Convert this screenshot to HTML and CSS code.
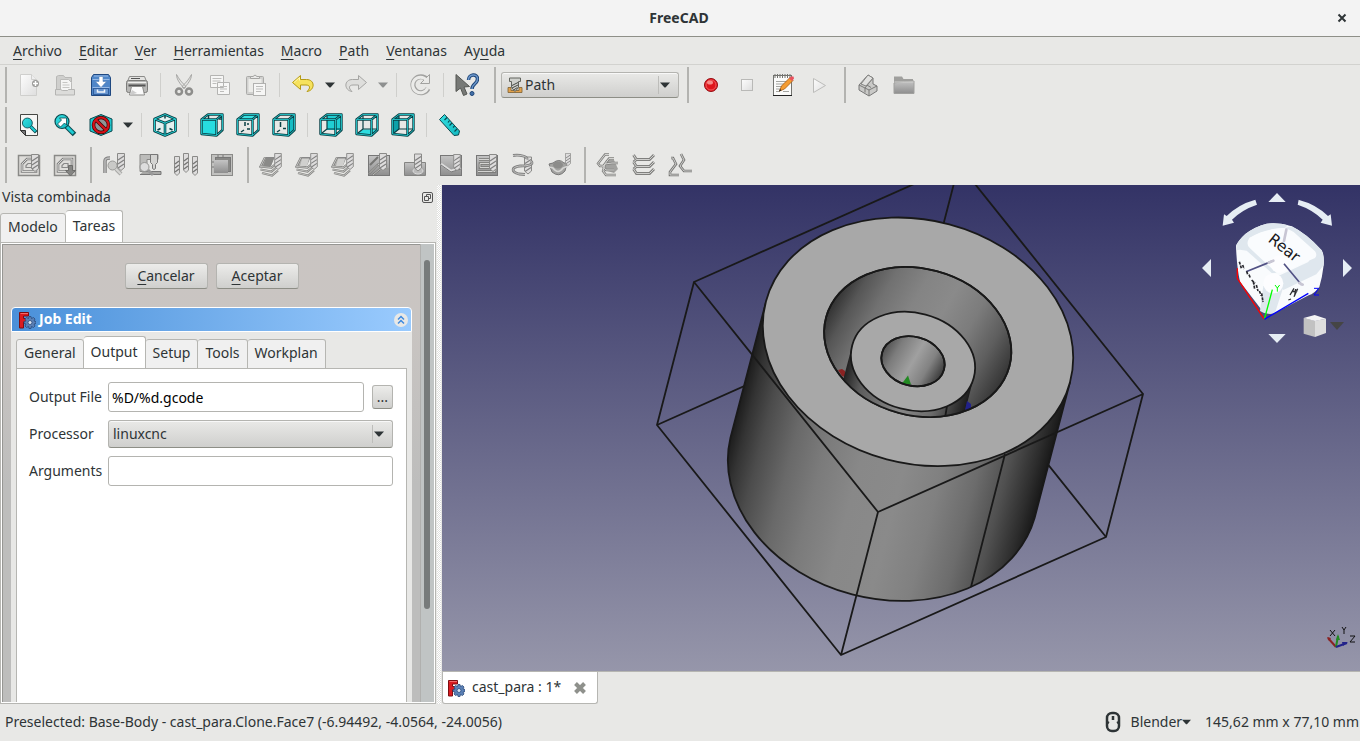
FILE: index.html
```html
<!DOCTYPE html>
<html lang="es">
<head>
<meta charset="utf-8">
<title>FreeCAD</title>
<link rel="stylesheet" href="styles.css">
</head>
<body>
<svg class="sprite" aria-hidden="true">
  <defs>
    <linearGradient id="teal" x1="0" y1="0" x2="1" y2="1"><stop offset="0" stop-color="#34e0e2"/><stop offset="1" stop-color="#12b8c0"/></linearGradient>
    <linearGradient id="gray" x1="0" y1="0" x2="0" y2="1"><stop offset="0" stop-color="#c4c4c4"/><stop offset="1" stop-color="#8e8e8e"/></linearGradient>
    <linearGradient id="pale" x1="0" y1="0" x2="1" y2="1"><stop offset="0" stop-color="#fdfdfd"/><stop offset="1" stop-color="#dedede"/></linearGradient>
  </defs>
  <symbol id="new" viewBox="0 0 24 24"><path d="M3.5 1.500h11l5 5v16h-16z" fill="url(#pale)" stroke="#cfcfcd"/><path d="M14.500 1.500v5h5" fill="#eee" stroke="#cfcfcd"/><circle cx="18.500" cy="10.500" r="3.500" fill="#9a9a98"/><path d="M18.500 8v5M16 10.500h5" stroke="#fff" stroke-width="1.500"/></symbol>
  <symbol id="open" viewBox="0 0 24 24"><path d="M3.500 17V3.500l2-1h5l1.500 2h6.500V17z" fill="#cfcfcd" stroke="#b8b8b6"/><path d="M7.500 18V6.500h8l3 3V18z" fill="#f5f5f4" stroke="#bcbcba"/><path d="M9.500 9.500h5M9.500 12h7M9.500 14.500h7" stroke="#c6c6c4"/><path d="M2.500 16.500h5l2 1h5l1-1h6v5.500h-19z" fill="#dcdcda" stroke="#b4b4b2"/></symbol>
  <symbol id="save" viewBox="0 0 24 24"><path d="M4.500 1.500h15l2 3v18h-19v-18z" fill="#4f86c8" stroke="#1f4880"/><path d="M5 3h14M3.500 6.500h17M3.500 14.500h17" stroke="#96b9e6"/><path d="M10 3.500h4v5h3.500l-5.500 6-5.500-6H10z" fill="#fff" stroke="#5f87b8" stroke-width=".6"/><rect x="4.500" y="15.500" width="15" height="6" fill="#6594cf" stroke="#315f9e"/><path d="M8.500 16.500v2.500h7v-2.500" fill="none" stroke="#f2f5fa" stroke-width="1.500"/></symbol>
  <symbol id="print" viewBox="0 0 24 24"><path d="M4.500 3.500h15l2 5h-19z" fill="#e3e3e1" stroke="#8b8b89"/><path d="M6 5.500h9" stroke="#555"/><rect x="1.500" y="7.500" width="21" height="12" rx="2" fill="#b8b8b6" stroke="#7c7c7a"/><path d="M3 9.500h18" stroke="#efefed"/><path d="M3.500 12.500h17" stroke="#555" stroke-width="2"/><path d="M6.500 13.500h11l2 8.500h-15z" fill="#fafafa" stroke="#8c8c8a"/><path d="M7 17l5 3-7 2z" fill="#ccc"/></symbol>
  <symbol id="cut" viewBox="0 0 24 24"><path d="M4.500 1.500c0 5 4 10 8 14l1.500-2C10 10 7 6 4.500 1.500zM19.500 1.500c0 5-4 10-8 14l-1.500-2c4-3.500 7-7.500 9.500-12z" fill="#e6e6e4" stroke="#a6a6a4"/><circle cx="7" cy="18.500" r="3" fill="none" stroke="#8e8e8c" stroke-width="2.500"/><circle cx="17" cy="18.500" r="3" fill="none" stroke="#8e8e8c" stroke-width="2.500"/></symbol>
  <symbol id="copy" viewBox="0 0 24 24"><path d="M2.500 2.500h13v12h-13zM9.500 9.500h12v12h-12z" fill="#f6f6f5" stroke="#b4b4b2"/><path d="M4.500 5.500h9M4.500 8h8M4.500 10.500h4M12 13.500h7M12 16h7M12 18.500h4" stroke="#bdbdbb"/></symbol>
  <symbol id="paste" viewBox="0 0 24 24"><rect x="2.500" y="3.500" width="17" height="18" rx="1" fill="#d1d1cf" stroke="#aaaaa8"/><rect x="4.500" y="6" width="13" height="13" fill="#ecece9"/><path d="M6.500 5.500v-2h2.500q2-3 4 0h2.500v2z" fill="#e9e9e8" stroke="#a4a4a2"/><rect x="9.500" y="10.500" width="12" height="12" fill="#f6f6f5" stroke="#b1b1af"/><path d="M12 13.500h7M12 16h7M12 18.500h5" stroke="#bdbdbb"/></symbol>
  <symbol id="undo" viewBox="0 0 24 24"><path d="M1.500 9.500L9.500 2.500v4h6c9 0 8.500 11 .5 12 4-3.500 3-6.500-1-6.500H9.500v4.500z" fill="#f6e25e" stroke="#b59a12" stroke-linejoin="round"/><path d="M3 9.500l5.500-5v3" fill="none" stroke="#fff6ae"/></symbol>
  <symbol id="redo" viewBox="0 0 24 24"><path d="M22.500 9.500l-8-7v4h-6c-9 0-8.500 11-.5 12-4-3.500-3-6.500 1-6.500h5.500v4.500z" fill="#dededc" stroke="#a5a5a3" stroke-linejoin="round"/></symbol>
  <symbol id="refresh" viewBox="0 0 24 24"><path d="M19 6.500A8 8 0 1 0 20 15.500" fill="none" stroke="#a2a2a0" stroke-width="5"/><path d="M21.500 1.500v9h-9z" fill="#e9e9e7" stroke="#a2a2a0" stroke-linejoin="round"/><path d="M18.500 7A7.800 7.800 0 1 0 19.600 15.200" fill="none" stroke="#ebebe9" stroke-width="3"/></symbol>
  <symbol id="whats" viewBox="0 0 24 24"><path d="M1 1.500v17l4.500-3.500 3 7.500 3.500-1.500-3-7 5.500-.5z" fill="#777976" stroke="#555753"/><path d="M13.500 7c0-6 9-7 9-1 0 5-5.500 4.500-5.500 10" fill="none" stroke="#1f4678" stroke-width="3.500"/><path d="M13.500 7c0-6 9-7 9-1 0 5-5.500 4.500-5.500 10" fill="none" stroke="#6b96cb" stroke-width="1.500"/><circle cx="17" cy="20.500" r="2" fill="#426fa8" stroke="#1f4678"/></symbol>
  <symbol id="path" viewBox="0 0 16 16"><path d="M1 15.500v-5h3v3h8v-3h3v5z" fill="#e3a24b" stroke="#7b6032" stroke-width=".8"/><path d="M2.500 1h11v3.500h-2v6l-3.500 4-3.500-4v-6h-2z" fill="#cfd1cd" stroke="#62655f"/><path d="M5 8.500l6-3M5 11l6-3M6.500 13l4-2.500" stroke="#454843"/></symbol>
  <symbol id="rec" viewBox="0 0 24 24"><circle cx="12" cy="12" r="6.500" fill="#df161c" stroke="#960d12"/><circle cx="12" cy="12" r="5" fill="none" stroke="#f15b5c"/><ellipse cx="11" cy="9.500" rx="3" ry="2" fill="#f68b87"/></symbol>
  <symbol id="stop" viewBox="0 0 24 24"><rect x="6.500" y="6.500" width="11" height="11" fill="url(#pale)" stroke="#b9b9b7"/></symbol>
  <symbol id="edit" viewBox="0 0 24 24"><rect x="2.500" y="2.500" width="18" height="20" fill="#fbfbfa" stroke="#72736f"/><path d="M2 22.500h19" stroke="#222"/><path d="M4 1v4M6.500 1v4M9 1v4M11.500 1v4M14 1v4M16.500 1v4M19 1v4" stroke="#72736f"/><path d="M5 8.500h11M5 11h8M5 13.500h6M5 16h5M5 18.500h4M12 18.500h6" stroke="#a4a5a1"/><path d="M8.500 18l2-5L19 4.500l3 3-8.500 8.500z" fill="#f49c32" stroke="#a75b10" stroke-width=".8"/><path d="M18 5.500l2-2h2.500l.5 2-2 2.500z" fill="#e8525e"/><path d="M8 18.500l1-2.500 1.500 1.500z" fill="#222"/></symbol>
  <symbol id="play" viewBox="0 0 24 24"><path d="M6.500 5.500v14l12-7z" fill="url(#pale)" stroke="#bcbcba" stroke-linejoin="round"/></symbol>
  <symbol id="part" viewBox="0 0 24 24"><path d="M3 12l9-10 5 3v6l4 2v5l-8 5-10-6z" fill="#c9c9c7" stroke="#777" stroke-linejoin="round"/><path d="M3 12l6 3 8-10M9 15v4.500M9 15l4 2 8-4M13 17v6M11 12l4 2.500" fill="none" stroke="#7b7b79"/><path d="M12 2l5 3-7 8-5-2z" fill="#e1e1df" stroke="#858583"/></symbol>
  <symbol id="folder" viewBox="0 0 24 24"><path d="M2 3.500h8l1.500 2.500H21v6H2z" fill="#9f9f9d"/><path d="M2 10q9-2 20-2v12.500H2z" fill="url(#gray)" stroke="#a0a09e"/><path d="M2.500 9h19" stroke="#cfcfcd"/></symbol>
  <symbol id="lens" viewBox="0 0 24 24"><path d="M13.500 13.500l8 8" stroke="#0b484e" stroke-width="5"/><path d="M13.500 13.500l7 7" stroke="#1ccbd2" stroke-width="3"/><circle cx="9" cy="8.500" r="7" fill="url(#teal)" stroke="#0b484e" stroke-width="1.200"/></symbol>
  <symbol id="fit" viewBox="0 0 24 24"><path d="M3.500 1.500h17v21h-12l-5-5z" fill="#f6f6f5" stroke="#454743"/><path d="M3.500 17.500h5v5z" fill="#777" stroke="#333"/><use href="#lens" x="4" y="4" width="17" height="17"/></symbol>
  <symbol id="zoomsel" viewBox="0 0 24 24"><use href="#lens" width="24" height="24"/><path d="M4.500 11l4-4-2-2h7v7l-2-2-4 4z" fill="#fff" stroke="#0b484e" stroke-width=".8"/></symbol>
  <symbol id="noentry" viewBox="0 0 24 24"><path d="M1 6l11-4.500L23 6v12l-11 4.500L1 18z" fill="#20c7ce" stroke="#0b484e" stroke-linejoin="round"/><circle cx="12" cy="12" r="7.500" fill="#8e9696" stroke="#3b0505" stroke-width="3.500"/><path d="M7 7l10 10" stroke="#3b0505" stroke-width="3.500"/><circle cx="12" cy="12" r="7.500" fill="none" stroke="#d51218" stroke-width="2.200"/><path d="M7 7l10 10" stroke="#d51218" stroke-width="2.200"/></symbol>
  <symbol id="iso" viewBox="0 0 24 24"><path d="M12 1.500L22.500 6v12L12 22.500 1.500 18V6z" fill="#e4f1f0"/><path d="M12 2.500v3M4.500 17l3-1.500M19.500 17l-3-1.500" stroke="#083f44" stroke-width="1.500"/><path d="M12 1.500L22.500 6v12L12 22.500 1.500 18V6zM1.500 6L12 10 22.500 6M12 10v12" fill="none" stroke="#083f44" stroke-width="2.600" stroke-linejoin="round"/><path d="M12 1.500L22.500 6v12L12 22.500 1.500 18V6zM1.500 6L12 10 22.500 6M12 10v12" fill="none" stroke="#26cfd2" stroke-width="1"/></symbol>
  <symbol id="frame" viewBox="0 0 24 24"><path d="M1.500 6.500H16.500V22.500L1.500 21zM1.500 6.500L8 1.500H22.500L16.500 6.500M22.500 1.500V17L16.500 22.500" fill="none" stroke="#083f44" stroke-width="2.400" stroke-linejoin="round"/><path d="M1.500 6.500H16.500V22.500L1.500 21zM1.500 6.500L8 1.500H22.500L16.500 6.500M22.500 1.500V17L16.500 22.500" fill="none" stroke="#22b9be" stroke-width="1"/></symbol>
  <symbol id="front" viewBox="0 0 24 24"><path d="M8.500 2v5M19 6h3" stroke="#083f44" stroke-width="1.500"/><path d="M1.500 6.500h15v16l-15-1.500z" fill="#27dce0"/><use href="#frame"/></symbol>
  <symbol id="top" viewBox="0 0 24 24"><path d="M1.500 6.500l6.500-5h14.500l-6 5z" fill="#38e3e5"/><path d="M9 9v4M8 17l-3 2M11 16h3M12 10v2" stroke="#083f44" stroke-width="1.500"/><use href="#frame"/></symbol>
  <symbol id="right" viewBox="0 0 24 24"><path d="M16.500 6.500l6-5V17l-6 5.500z" fill="#15bcc4"/><path d="M8.500 9v5M8 17l-3 2M11 15.500h3" stroke="#083f44" stroke-width="1.500"/><use href="#frame"/></symbol>
  <symbol id="rear" viewBox="0 0 24 24"><path d="M8 1.500h14.500V17H8z" fill="#20cfd4"/><path d="M8 3v13M8 16l-5 4M8 16h14" fill="none" stroke="#083f44" stroke-width="1.200"/><use href="#frame"/></symbol>
  <symbol id="bottom" viewBox="0 0 24 24"><path d="M1.500 21L8 16.500h14.500l-6 6z" fill="#2ddde0"/><path d="M8 3v13M8 16l-5 4M8 16h14" fill="none" stroke="#083f44" stroke-width="1.200"/><use href="#frame"/></symbol>
  <symbol id="left" viewBox="0 0 24 24"><path d="M1.500 6.500l6.500-5V16.500l-6.500 4.500z" fill="#0ea1a9"/><path d="M8 3v13M8 16l-5 4M8 16h14" fill="none" stroke="#083f44" stroke-width="1.200"/><use href="#frame"/></symbol>
  <symbol id="ruler" viewBox="0 0 24 24"><path d="M1.500 6.500L6.500 1.500l15 16.500-1 4-4.500.5z" fill="url(#teal)" stroke="#0b484e" stroke-linejoin="round"/><path d="M9 4.500L6.500 7M11.500 7.500l-1.500 2M14 10l-2.500 2.500M16.500 13l-1.500 1.500M19 16l-2.500 2.500" stroke="#0b484e" stroke-width="1.200"/></symbol>
  <symbol id="bit" viewBox="0 0 8 18"><path d="M.5.5h7v14l-3.500 3-3.500-3z" fill="#dedddd" stroke="#8a8a88"/><path d="M1 7l6-4M1 11l6-4M1 15l6-4" stroke="#808080" stroke-width="1.200"/></symbol>
  <symbol id="job" viewBox="0 0 24 24"><path d="M1.500 2.500h21v20h-21z" fill="#deddda" stroke="#8a8a88" stroke-width="1.500"/><path d="M5 18.500V11l5-5h9v12.500H5z" fill="none" stroke="#808080" stroke-width="2.600"/><path d="M5 18.500V11l5-5h9v12.500H5z" fill="none" stroke="#d8d8d5"/><path d="M9 14.500v-2l2-2h4v4z" fill="none" stroke="#888" stroke-width="1.200"/></symbol>
  <symbol id="jobbit" viewBox="0 0 24 24"><use href="#job"/><use href="#bit" x="14" y="1" width="8" height="18"/></symbol>
  <symbol id="post" viewBox="0 0 24 24"><use href="#job"/><path d="M15.500 12.500h4v5h3l-5 5.500-5-5.500h3z" fill="#858583" stroke="#6c6c6a"/></symbol>
  <symbol id="inspect" viewBox="0 0 24 24"><path d="M3 20V8q0-3 5-3" fill="none" stroke="#808080" stroke-width="3.500"/><path d="M3 20V8q0-3 5-3" fill="none" stroke="#bbb" stroke-width="1.500"/><use href="#bit" x="15" y="0" width="8" height="18"/><circle cx="10.500" cy="12.500" r="4.500" fill="#c9c9c7" stroke="#9a9a98"/><path d="M14 16l5 5" stroke="#a9a9a7" stroke-width="4"/><path d="M14 16l5 5" stroke="#d5d5d3" stroke-width="2"/></symbol>
  <symbol id="sim" viewBox="0 0 24 24"><path d="M2 1.500h18v5H9v12H2z" fill="#bcbcba" stroke="#8a8a88"/><path d="M12.500 1.500h7v8l-2 2v4l-1.500 1-1.500-1v-4l-2-2z" fill="#d4d4d2" stroke="#777"/><path d="M5 18.500h18v3H2" fill="#a9a9a7" stroke="#777"/><circle cx="6.500" cy="14" r="4.500" fill="#ddd" stroke="#969694"/><path d="M10 17l5 5" stroke="#999" stroke-width="3"/></symbol>
  <symbol id="longbit" viewBox="0 0 6 20"><path d="M.5.500h5v16.500l-2.500 2.500L.5 17z" fill="#dedddd" stroke="#8a8a88"/><path d="M1 8l4-3M1 12l4-3M1 16l4-3" stroke="#757573" stroke-width="1.300"/></symbol>
  <symbol id="bits" viewBox="0 0 24 24"><use href="#longbit" x="0" y="3" width="6" height="20"/><use href="#longbit" x="9" y="0" width="6" height="20"/><use href="#longbit" x="18" y="3" width="6" height="20"/></symbol>
  <symbol id="stock" viewBox="0 0 24 24"><rect x="1.500" y="1.500" width="21" height="21" fill="#c1c1bf" stroke="#8a8a88"/><rect x="5.500" y="4.500" width="15" height="14" fill="#888886" stroke="#777"/><rect x="4" y="7" width="14" height="13" fill="url(#gray)"/><path d="M8 2v2M13 2v2M2 9h2M2 14h2" stroke="#777"/></symbol>
  <symbol id="layers" viewBox="0 0 24 24"><path d="M6 4.500h9l-4 9H2z" fill="#aeaeac" stroke="#888"/><path d="M6 4.500L1.500 13.500l11 1 6-5M1.500 16.500l11 2 6-5M3 20l10 2.500 6-5" fill="none" stroke="#80807e" stroke-width="2.200"/><path d="M6 4.500L1.500 13.500l11 1 6-5M1.500 16.500l11 2 6-5M3 20l10 2.500 6-5" fill="none" stroke="#d0d0ce" stroke-width=".8"/></symbol>
  <symbol id="contour" viewBox="0 0 24 24"><use href="#layers"/><path d="M7 5h8l-3 8H4z" fill="#8a8a88"/><use href="#bit" x="15" y="0" width="8" height="17"/></symbol>
  <symbol id="pocket" viewBox="0 0 24 24"><use href="#layers"/><path d="M7 6h7l-2 7H5z" fill="#d0d0ce"/><use href="#bit" x="15" y="0" width="8" height="17"/></symbol>
  <symbol id="plate" viewBox="0 0 24 24"><rect x="1.500" y="2.500" width="21" height="20" fill="url(#gray)" stroke="#777"/></symbol>
  <symbol id="face" viewBox="0 0 24 24"><use href="#plate"/><path d="M2 20.500l9-9h4M6 22l7-6h9M3 12l8-8" fill="none" stroke="#757573" stroke-width="2"/><path d="M2 20.500l9-9h4M6 22l7-6h9" stroke="#d0d0ce" fill="none" stroke-width=".8"/><use href="#bit" x="12" y="0" width="8" height="18"/></symbol>
  <symbol id="drill" viewBox="0 0 24 24"><path d="M1.500 9.500h21v13h-21z" fill="url(#gray)" stroke="#848482"/><ellipse cx="15" cy="18" rx="5" ry="3" fill="#bbb" stroke="#ddd"/><use href="#bit" x="11" y="0" width="8" height="19"/></symbol>
  <symbol id="engrave" viewBox="0 0 24 24"><use href="#plate"/><path d="M2 11l10 7 10-3" fill="none" stroke="#ddd" stroke-width="2.500"/><path d="M2 12l10 7 10-3" fill="none" stroke="#777"/><use href="#bit" x="14" y="1" width="8" height="17"/></symbol>
  <symbol id="slot" viewBox="0 0 24 24"><use href="#plate"/><path d="M4 6.500h16v4H5v4h15v4H3" fill="none" stroke="#757573" stroke-width="2.600"/><path d="M4 6.500h16v4H5v4h15v4H3" fill="none" stroke="#d4d4d2"/><use href="#bit" x="14" y="1" width="8" height="18"/></symbol>
  <symbol id="helix" viewBox="0 0 24 24"><use href="#bit" x="13" y="3" width="8" height="19"/><path d="M2 2.500c7-1 15 1 14 4M20 8c4 4-4 5-11 5-9 1-9 6-1 8l6 .5" fill="none" stroke="#808080" stroke-width="2.800"/><path d="M2 2.500c7-1 15 1 14 4M20 8c4 4-4 5-11 5-9 1-9 6-1 8l6 .5" fill="none" stroke="#c8c8c6"/></symbol>
  <symbol id="surface" viewBox="0 0 24 24"><path d="M2 11l4-1q6-5 11 0h3l-2 8q-6 7-13 1z" fill="#a3a3a1" stroke="#777"/><path d="M2 14l4 1q5 7 10 0l5-2" fill="none" stroke="#d7d7d5" stroke-width="1.500"/><ellipse cx="11" cy="12" rx="5" ry="3.500" fill="#8c8c8a"/><use href="#bit" x="18" y="0" width="6" height="13"/></symbol>
  <symbol id="array" viewBox="0 0 24 24"><path d="M10 7h8l4 9-4 4-10-3z" fill="#a2a2a0"/><path d="M13 1.500H9l-7 9 2 2.500h4M18 5.500h-5l-6 8 3 3.500h8M22 10h-6l-7 1-2 7 3 4h10" fill="none" stroke="#80807e" stroke-width="2.400"/><path d="M13 1.500H9l-7 9 2 2.500h4M18 5.500h-5l-6 8 3 3.500h8M22 10h-6l-7 1-2 7 3 4h10" fill="none" stroke="#d4d4d2"/></symbol>
  <symbol id="copyop" viewBox="0 0 24 24"><path d="M1.500 2l3 4.500h13L22 2M1.500 9l3 4.500h13L22 9M1.500 16l3 4.500h13l4.500-4.500M1.500 9l3-2.500M1.500 16l3-2.500" fill="none" stroke="#80807e" stroke-width="2.800"/><path d="M1.500 2l3 4.500h13L22 2M1.500 9l3 4.500h13L22 9M1.500 16l3 4.500h13l4.500-4.500M1.500 9l3-2.500M1.500 16l3-2.500" fill="none" stroke="#d0d0ce"/></symbol>
  <symbol id="simple" viewBox="0 0 24 24"><path d="M3 5h2l3 6-6 8v3h9M13 1l3 6-4 6 4 5h8" fill="none" stroke="#757573" stroke-width="2.600"/><path d="M3 5h2l3 6-6 8v3h9M13 1l3 6-4 6 4 5h8" fill="none" stroke="#d0d0ce"/></symbol>
  <symbol id="freecad" viewBox="0 0 18 18"><path d="M1.500 1.500h9V5H5.500v2.500H9V11H5.500v6h-4z" fill="#db1b20" stroke="#7e0d10"/><path d="M2.500 2.500h7.500" stroke="#f26a6a"/><path d="M11 5.500h2l.5 2 2-1 1.500 1.500-1 2 2 .5v2l-2 .5 1 2-1.500 1.500-2-1-.5 2h-2l-.5-2-2 1L7 15l1-2-2-.500v-2l2-.5-1-2 1.500-1.500 2 1z" fill="#5a80b6" stroke="#294a7b" stroke-width=".8"/><circle cx="12" cy="11.500" r="2" fill="#dce5f1" stroke="#294a7b" stroke-width=".8"/></symbol>
  <symbol id="arrow" viewBox="0 0 10 6"><path d="M0 .5h10L5.500 5.500h-1z" fill="currentColor"/></symbol>
</svg>

<div class="window">
  <header class="titlebar">
    <h1>FreeCAD</h1>
    <button class="close" type="button" aria-label="Cerrar"><svg viewBox="0 0 10 10"><path d="M1.500 1.500l7 7M8.500 1.500l-7 7" stroke="#2e3436" stroke-width="2"/></svg></button>
  </header>

  <nav class="menubar">
    <button type="button"><u>A</u>rchivo</button>
    <button type="button"><u>E</u>ditar</button>
    <button type="button"><u>V</u>er</button>
    <button type="button"><u>H</u>erramientas</button>
    <button type="button"><u>M</u>acro</button>
    <button type="button"><u>P</u>ath</button>
    <button type="button"><u>V</u>entanas</button>
    <button type="button">Ay<u>u</u>da</button>
  </nav>

  <div class="toolrow">
    <div class="toolbar">
      <button class="tool" type="button" aria-label="Nuevo"><svg><use href="#new"/></svg></button>
      <button class="tool" type="button" aria-label="Abrir"><svg><use href="#open"/></svg></button>
      <button class="tool" type="button" aria-label="Guardar"><svg><use href="#save"/></svg></button>
      <button class="tool" type="button" aria-label="Imprimir"><svg><use href="#print"/></svg></button>
      <span class="sep"></span>
      <button class="tool" type="button" aria-label="Cortar"><svg><use href="#cut"/></svg></button>
      <button class="tool" type="button" aria-label="Copiar"><svg><use href="#copy"/></svg></button>
      <button class="tool" type="button" aria-label="Pegar"><svg><use href="#paste"/></svg></button>
      <span class="sep"></span>
      <button class="tool" type="button" aria-label="Deshacer"><svg><use href="#undo"/></svg></button>
      <button class="more" type="button" aria-label="Lista de deshacer"><svg><use href="#arrow"/></svg></button>
      <button class="tool" type="button" aria-label="Rehacer"><svg><use href="#redo"/></svg></button>
      <button class="more dim" type="button" aria-label="Lista de rehacer"><svg><use href="#arrow"/></svg></button>
      <span class="sep"></span>
      <button class="tool" type="button" aria-label="Refrescar"><svg><use href="#refresh"/></svg></button>
      <span class="sep"></span>
      <button class="tool" type="button" aria-label="Ayuda contextual"><svg><use href="#whats"/></svg></button>
    </div>
    <div class="toolbar wide">
      <div class="combo workbench">
        <svg class="lead"><use href="#path"/></svg>
        <select aria-label="Entorno de trabajo"><option>Path</option></select>
        <svg class="drop"><use href="#arrow"/></svg>
      </div>
    </div>
    <div class="toolbar">
      <button class="tool" type="button" aria-label="Grabar macro"><svg><use href="#rec"/></svg></button>
      <button class="tool" type="button" aria-label="Detener macro"><svg><use href="#stop"/></svg></button>
      <button class="tool" type="button" aria-label="Macros"><svg><use href="#edit"/></svg></button>
      <button class="tool" type="button" aria-label="Ejecutar macro"><svg><use href="#play"/></svg></button>
    </div>
    <div class="toolbar">
      <button class="tool" type="button" aria-label="Crear pieza"><svg><use href="#part"/></svg></button>
      <button class="tool" type="button" aria-label="Crear grupo"><svg><use href="#folder"/></svg></button>
    </div>
  </div>

  <div class="toolrow">
    <div class="toolbar">
      <button class="tool" type="button" aria-label="Ajustar todo"><svg><use href="#fit"/></svg></button>
      <button class="tool" type="button" aria-label="Ajustar selección"><svg><use href="#zoomsel"/></svg></button>
      <button class="tool" type="button" aria-label="Estilo de dibujo"><svg><use href="#noentry"/></svg></button>
      <button class="more" type="button" aria-label="Estilos"><svg><use href="#arrow"/></svg></button>
      <span class="sep"></span>
      <button class="tool" type="button" aria-label="Isométrica"><svg><use href="#iso"/></svg></button>
      <span class="sep"></span>
      <button class="tool" type="button" aria-label="Frontal"><svg><use href="#front"/></svg></button>
      <button class="tool" type="button" aria-label="Planta"><svg><use href="#top"/></svg></button>
      <button class="tool" type="button" aria-label="Derecha"><svg><use href="#right"/></svg></button>
      <span class="sep"></span>
      <button class="tool" type="button" aria-label="Posterior"><svg><use href="#rear"/></svg></button>
      <button class="tool" type="button" aria-label="Inferior"><svg><use href="#bottom"/></svg></button>
      <button class="tool" type="button" aria-label="Izquierda"><svg><use href="#left"/></svg></button>
      <span class="sep"></span>
      <button class="tool" type="button" aria-label="Medir distancia"><svg><use href="#ruler"/></svg></button>
    </div>
  </div>

  <div class="toolrow">
    <div class="toolbar">
      <button class="tool" type="button" aria-label="Trabajo"><svg><use href="#jobbit"/></svg></button>
      <button class="tool" type="button" aria-label="Postprocesar"><svg><use href="#post"/></svg></button>
    </div>
    <div class="toolbar">
      <button class="tool" type="button" aria-label="Inspeccionar"><svg><use href="#inspect"/></svg></button>
      <button class="tool" type="button" aria-label="Simulador"><svg><use href="#sim"/></svg></button>
      <button class="tool" type="button" aria-label="Herramientas"><svg><use href="#bits"/></svg></button>
      <button class="tool" type="button" aria-label="Material"><svg><use href="#stock"/></svg></button>
    </div>
    <div class="toolbar">
      <button class="tool" type="button" aria-label="Contorno"><svg><use href="#contour"/></svg></button>
      <button class="tool" type="button" aria-label="Perfil de caras"><svg><use href="#pocket"/></svg></button>
      <button class="tool" type="button" aria-label="Perfil de aristas"><svg><use href="#pocket"/></svg></button>
      <button class="tool" type="button" aria-label="Cajera"><svg><use href="#face"/></svg></button>
      <button class="tool" type="button" aria-label="Taladrado"><svg><use href="#drill"/></svg></button>
      <button class="tool" type="button" aria-label="Grabado"><svg><use href="#engrave"/></svg></button>
      <button class="tool" type="button" aria-label="Planeado"><svg><use href="#slot"/></svg></button>
      <button class="tool" type="button" aria-label="Hélice"><svg><use href="#helix"/></svg></button>
      <button class="tool" type="button" aria-label="Superficie"><svg><use href="#surface"/></svg></button>
    </div>
    <div class="toolbar">
      <button class="tool" type="button" aria-label="Matriz"><svg><use href="#array"/></svg></button>
      <button class="tool" type="button" aria-label="Copia"><svg><use href="#copyop"/></svg></button>
      <button class="tool" type="button" aria-label="Copia simple"><svg><use href="#simple"/></svg></button>
    </div>
  </div>

  <main class="work">
    <aside class="dock">
      <div class="dockhead">
        <h2>Vista combinada</h2>
        <button class="float" type="button" aria-label="Flotar"><svg viewBox="0 0 11 11"><rect x=".5" y=".5" width="10" height="10" rx="1.500" fill="none" stroke="#555"/><path d="M4.500 4V2.500h4v4H7M2.500 4.500H6.500v4h-4z" fill="none" stroke="#555"/></svg></button>
      </div>
      <div class="tabs outer">
        <button class="tab" type="button">Modelo</button>
        <button class="tab on" type="button">Tareas</button>
      </div>
      <div class="pane">
        <div class="tasks">
          <div class="actions">
            <button class="push" type="button"><u>C</u>ancelar</button>
            <button class="push" type="button"><u>A</u>ceptar</button>
          </div>
          <section class="job">
            <div class="jobhead">
              <svg class="logo"><use href="#freecad"/></svg>
              <h3>Job Edit</h3>
              <button class="fold" type="button" aria-label="Plegar"><svg viewBox="0 0 14 14"><circle cx="7" cy="7" r="7" fill="#e8e8e6"/><path d="M4 6.500l3-3 3 3M4 10.500l3-3 3 3" fill="none" stroke="#3f8ade" stroke-width="1.500"/></svg></button>
            </div>
            <div class="jobbody">
              <div class="tabs">
                <button class="tab" type="button">General</button>
                <button class="tab on" type="button">Output</button>
                <button class="tab" type="button">Setup</button>
                <button class="tab" type="button">Tools</button>
                <button class="tab" type="button">Workplan</button>
              </div>
              <form class="form">
                <label for="file">Output File</label>
                <div class="filebox">
                  <input id="file" type="text" value="%D/%d.gcode">
                  <button class="browse" type="button" aria-label="Examinar">...</button>
                </div>
                <label for="proc">Processor</label>
                <div class="combo">
                  <select id="proc"><option>linuxcnc</option></select>
                  <svg class="drop"><use href="#arrow"/></svg>
                </div>
                <label for="args">Arguments</label>
                <input id="args" type="text">
              </form>
            </div>
          </section>
        </div>
        <div class="scroll"><span class="thumb"></span></div>
      </div>
    </aside>
    <div class="splitter"></div>

    <section class="viewer">
      <div class="canvas">
        <svg class="scene" viewBox="442 185 918 486" preserveAspectRatio="xMidYMid slice">
          <defs>
            <linearGradient id="side" gradientUnits="userSpaceOnUse" x1="766" y1="302" x2="1070" y2="382">
              <stop offset="0" stop-color="#1c1c1c"/><stop offset=".04" stop-color="#333"/><stop offset=".1" stop-color="#4c4c4c"/><stop offset=".2" stop-color="#696969"/><stop offset=".3" stop-color="#7b7b7b"/><stop offset=".42" stop-color="#888"/><stop offset=".56" stop-color="#8a8a8a"/><stop offset=".68" stop-color="#808080"/><stop offset=".79" stop-color="#6c6c6c"/><stop offset=".88" stop-color="#505050"/><stop offset=".96" stop-color="#2d2d2d"/><stop offset="1" stop-color="#191919"/>
            </linearGradient>
            <linearGradient id="wall" gradientUnits="userSpaceOnUse" x1="826" y1="318" x2="1009" y2="366">
              <stop offset="0" stop-color="#303030"/><stop offset=".1" stop-color="#565656"/><stop offset=".22" stop-color="#717171"/><stop offset=".38" stop-color="#848484"/><stop offset=".54" stop-color="#8a8a8a"/><stop offset=".7" stop-color="#7c7c7c"/><stop offset=".85" stop-color="#5e5e5e"/><stop offset="1" stop-color="#343434"/>
            </linearGradient>
            <linearGradient id="postside" gradientUnits="userSpaceOnUse" x1="852" y1="345" x2="974" y2="378">
              <stop offset="0" stop-color="#202020"/><stop offset=".15" stop-color="#5c5c5c"/><stop offset=".5" stop-color="#888"/><stop offset=".75" stop-color="#6c6c6c"/><stop offset="1" stop-color="#1c1c1c"/>
            </linearGradient>
            <linearGradient id="bore" gradientUnits="userSpaceOnUse" x1="882" y1="353" x2="944" y2="370">
              <stop offset="0" stop-color="#505050"/><stop offset=".2" stop-color="#7c7c7c"/><stop offset=".5" stop-color="#a0a0a0"/><stop offset=".75" stop-color="#828282"/><stop offset="1" stop-color="#383838"/>
            </linearGradient>
            <clipPath id="holeclip"><ellipse cx="917.700" cy="342" rx="94.900" ry="73.300" transform="rotate(15 917.700 342)"/></clipPath>
            <clipPath id="boreclip"><ellipse cx="913" cy="361.300" rx="32.100" ry="24.500" transform="rotate(15 913 361.300)"/></clipPath>
          </defs>
          <g fill="none" stroke="#191919" stroke-width="1.800" stroke-linejoin="round">
            <path d="M694 282L959 164L1143 394M959 164L922 307M657 425L922 307L1106 537"/>
            <path d="M766 302L730.400 438A157.300 122.600 14.900 0 0 1034.600 518L1070 382z" fill="url(#side)"/>
            <ellipse cx="918" cy="341.800" rx="157.300" ry="121.600" transform="rotate(14.900 918 341.800)" fill="#a8a8a8"/>
            <ellipse cx="917.700" cy="342" rx="94.900" ry="73.300" transform="rotate(15 917.700 342)" fill="url(#wall)"/>
            <g clip-path="url(#holeclip)">
              <path d="M838 370l4-1 3 2v6l-3-1z" fill="#8a2222" stroke="none"/>
              <path d="M852.200 345.500L837 403A62.900 48.600 15 0 0 959 435L973.800 377.500z" fill="url(#postside)" stroke="none"/>
              <path d="M947 406l-2 12"/>
              <path d="M967 401l4 3v6h-6z" fill="#22228a" stroke="none"/>
            </g>
            <ellipse cx="917.700" cy="342" rx="94.900" ry="73.300" transform="rotate(15 917.700 342)"/>
            <ellipse cx="913" cy="361.500" rx="62.900" ry="48.600" transform="rotate(15 913 361.500)" fill="#a8a8a8"/>
            <ellipse cx="913" cy="361.300" rx="32.100" ry="24.500" transform="rotate(15 913 361.300)" fill="url(#bore)"/>
            <path d="M902 383.500l6-8 3 9z" fill="#228a22" stroke="none" clip-path="url(#boreclip)"/>
            <ellipse cx="913" cy="361.300" rx="32.100" ry="24.500" transform="rotate(15 913 361.300)"/>
            <path d="M1005 454L971 587M694 282L657 425L841 655L1106 537L1143 394L878 512zM878 512L841 655"/>
          </g>
        </svg>
        <svg class="navcube" viewBox="0 0 540 510">
          <g fill="#e6edf4">
            <path d="M291 24l26 27h-52zM291 474l-26-27h52zM66 249l27-27v54zM516 249l-27-27v54z"/>
            <path d="M226 44l5 15q-45 15-75 45l6 9-34 9 4-34 8 5q35-35 86-49zM356 44l-3 15q45 15 75 45l-6 9 34 9-4-34-8 5q-35-35-89-49z"/>
          </g>
          <path d="M260 116q40-4 75 8 45 22 90 72 9 15 6 45-4 35-13 65-15 20-32 25L284 384q-25 6-36-5L180 290q-10-45-12-108 8-16 28-35 28-22 64-31z" fill="#f9fbfd"/>
          <path d="M169 180q8-16 27-33l14 12 71 68 15 8q5 30-20 30l-76-68-20-3-9 2zM260 116q35-4 65 5l-12 8q-60 5-105 30l-12-12q28-22 64-31zM313 129l22-5q45 22 90 72 8 20 6 45l-22 27-99 47-20-40 95-44 10-20-40-40z" fill="#dfe7ee"/>
          <path d="M208 159q45-28 100-30 25 3 42 20l55 50q8 10 0 20l-90 40q-20 8-35-4l-70-65q-14-12-2-31z" fill="#fafcfe"/>
          <path d="M240 378l10-75q30 10 60 3l-25 78q-30 5-45-6z" fill="#dfe7ee"/>
          <circle cx="280" cy="295" r="30" fill="#fdfdff"/><circle cx="298" cy="237" r="26" fill="#fdfdff"/>
          <path d="M278 228l-80 32M312 236l53 64" stroke="#515184" stroke-width="5"/>
          <path d="M319 134l-7 34M280 227l-14 6M358 294l10 5" stroke="#c8c6d4" stroke-width="8" stroke-linecap="round"/>
          <path d="M178 230l6 20M188 240l4 12M200 259l3 9M207 269l4 10M220 290l4 22M229 300l5 18M238 318l6 14M245 325l4 26M215 285l10 10" stroke="#2a2a30" stroke-width="5" stroke-dasharray="9 3"/>
          <path d="M330 330l12-20M342 335l11-24M336 320l16-2M325 345l8-3M347 312l-3 20" stroke="#2d2d32" stroke-width="4"/>
          <text x="262" y="168" transform="rotate(38 262 168)" class="cubetext">Rear</text>
          <path d="M253 403L172 280V250" fill="none" stroke="#f00" stroke-width="4"/>
          <path d="M253 403L277 314" stroke="#0f0" stroke-width="4"/>
          <path d="M253 403L385 325" stroke="#00f" stroke-width="4"/>
          <path d="M285 300l7 9 7-9M292 309v11" fill="none" stroke="#0f0" stroke-width="3"/>
          <path d="M402 310h14l-14 20h15" fill="none" stroke="#00f" stroke-width="3"/>
          <path d="M371 399l34 8v49l-34-10z" fill="#c2c2c2"/><path d="M405 407l33-6v43l-33 12z" fill="#dedede"/><path d="M371 399l33-9 34 11-33 7z" fill="#f4f4f4"/>
          <path d="M450 411h42l-21 24z" fill="#454545"/>
        </svg>
        <svg class="axes" viewBox="0 0 30 24">
          <path d="M10 20L2 11" stroke="#8a2222" stroke-width="2"/><path d="M1 10l4 1-2 3z" fill="#8a2222"/>
          <path d="M10 20l2-11" stroke="#228a22" stroke-width="2"/><path d="M12 7l2 6h-4z" fill="#228a22"/>
          <path d="M10 20l11-4" stroke="#22228a" stroke-width="2"/><path d="M22 15l-6 0 1 4z" fill="#22228a"/>
          <path d="M4 3l5 6M9 3l-5 6M16 0l2 3 2-3M18 3v4M24 9h5l-5 6h5" fill="none" stroke="#111"/>
        </svg>
      </div>
      <div class="docbar">
        <div class="doctab">
          <svg class="logo"><use href="#freecad"/></svg>
          <span>cast_para : 1*</span>
          <button class="tabclose" type="button" aria-label="Cerrar pestaña"><svg viewBox="0 0 14 14"><path d="M2.500 2.500l9 9M11.500 2.500l-9 9" stroke="#8f918c" stroke-width="4"/></svg></button>
        </div>
      </div>
    </section>
  </main>

  <footer class="status">
    <span class="message">Preselected: Base-Body - cast_para.Clone.Face7 (-6.94492, -4.0564, -24.0056)</span>
    <button class="navstyle" type="button">
      <svg class="mouse" viewBox="0 0 16 22"><rect x="2" y="2" width="12" height="18" rx="5" fill="none" stroke="#2e3436" stroke-width="2.500"/><path d="M2 11l2 1M14 11l-2 1M8 5v4" stroke="#2e3436" stroke-width="2.500"/></svg>
      <span>Blender</span><svg class="mini"><use href="#arrow"/></svg>
    </button>
    <span>145,62 mm x 77,10 mm</span>
  </footer>
</div>
</body>
</html>
```
FILE: styles.css
```css
* { box-sizing: border-box; }

body {
  margin: 0;
  background: #e8e8e6;
  color: #2e3436;
  font: 14px/20px "Noto Sans", "Open Sans", sans-serif;
}

button, select, input { font: inherit; color: inherit; margin: 0; }
button { background: none; border: 0; padding: 0; white-space: nowrap; }
h1, h2, h3 { margin: 0; font-size: 14px; font-weight: 400; }
u { text-underline-offset: 3px; text-decoration-skip-ink: none; }
svg { display: block; flex: none; }

.sprite { position: absolute; width: 0; height: 0; }

.window { display: flex; flex-direction: column; height: 100vh; overflow: hidden; }

.titlebar {
  display: flex;
  align-items: center;
  height: 37px;
  padding: 0 13px 0 21px;
  background: #f3f3f3;
  border-bottom: 1px solid #8e8f88;
}
.titlebar h1 { flex: 1; text-align: center; font-weight: 700; }
.close { width: 10px; height: 10px; }

.menubar {
  display: flex;
  gap: 17px;
  height: 28px;
  padding: 0 13px;
  border-bottom: 1px solid #d2d2cf;
}

.toolrow { display: flex; height: 40px; gap: 2px; }
.toolbar { display: flex; align-items: center; }
.toolbar.wide { margin-left: 2px; }
.toolbar::before {
  content: "";
  width: 2px;
  height: 36px;
  margin: 0 4px 0 5px;
  background: #b3b3b0;
}
.tool { display: flex; align-items: center; justify-content: center; width: 36px; height: 36px; }
.tool svg { width: 24px; height: 24px; }
.more { display: flex; align-items: center; justify-content: center; width: 17px; height: 36px; }
.more svg, .drop { width: 10px; height: 6px; }
.dim { color: #8e9090; }
.sep { width: 1px; height: 24px; margin: 0 5px; background: #cfcfcc; }

.combo { position: relative; display: flex; align-items: center; }
.combo select {
  appearance: none;
  width: 100%;
  height: 28px;
  padding: 0 26px 0 4px;
  border: 1px solid #b4b4b0;
  border-bottom-color: #8d8e86;
  border-radius: 3px;
  background: linear-gradient(#e9e9e7, #cfcfcd);
  box-shadow: inset 0 1px #f8f8f8;
}
.combo::after {
  content: "";
  position: absolute;
  right: 20px;
  width: 1px;
  height: 18px;
  background: #bdbdba;
}
.drop { position: absolute; right: 9px; }
.lead { position: absolute; left: 6px; width: 16px; height: 16px; }
.workbench { width: 178px; margin: 0 1px; }
.workbench select { height: 26px; padding-left: 23px; }

.work { display: flex; flex: 1; min-height: 0; }
.dock { display: flex; flex-direction: column; width: 436px; }
.dockhead { display: flex; align-items: flex-start; justify-content: space-between; height: 25px; padding: 2px 3px 0 2px; }
.float { margin-top: 5px; }
.float, .float svg { width: 11px; height: 11px; }

.tabs { display: flex; align-items: flex-end; margin-bottom: -1px; }
.tab {
  height: 30px;
  padding: 0 7px 2px;
  background: #f0f0f0;
  border: 1px solid #b6b6b2;
  border-left-width: 0;
  border-radius: 3px 3px 0 0;
}
.tab:first-child { border-left-width: 1px; }
.tab.on { height: 33px; background: #fff; border-bottom-color: #fff; }

.pane {
  display: flex;
  flex: 1;
  min-height: 0;
  padding: 1px;
  border: 1px solid #b6b6b2;
  background: #fff;
}
.tasks {
  flex: 1;
  min-width: 0;
  display: flex;
  flex-direction: column;
  padding: 18px 8px 0;
  border: 1px solid #969693;
  border-width: 1px 0 0 1px;
  background: linear-gradient(#cac5c2, #c9c5c2 80px, #bdbdbc 240px);
}
.actions { display: flex; justify-content: center; gap: 8px; }
.push {
  width: 83px;
  height: 26px;
  border: 1px solid #b4b4b0;
  border-bottom-color: #8d8e86;
  border-radius: 3px;
  background: linear-gradient(#ececea, #cfcfcd);
}
.job { display: flex; flex-direction: column; flex: 1; min-height: 0; margin-top: 18px; }
.jobhead {
  display: flex;
  align-items: center;
  gap: 3px;
  height: 25px;
  padding: 0 3px 0 6px;
  border: 1px solid #fff;
  border-radius: 4px 4px 0 0;
  background: linear-gradient(90deg, #4a90d9, #9acbfe);
}
.jobhead h3 { flex: 1; padding-bottom: 2px; color: #fff; font-weight: 700; }
.logo { width: 18px; height: 18px; }
.fold, .fold svg { width: 14px; height: 14px; }
.jobbody { display: flex; flex-direction: column; flex: 1; padding: 4px 5px 0; background: #e8e8e6; }

.form {
  flex: 1;
  display: grid;
  grid-template-columns: 72px 1fr;
  align-content: start;
  align-items: center;
  gap: 8px 7px;
  padding: 13px 13px 0 12px;
  border: 1px solid #b6b6b2;
  border-bottom: 0;
  background: #fff;
  white-space: nowrap;
}
.form input {
  width: 100%;
  min-width: 0;
  height: 30px;
  padding: 0 3px;
  border: 1px solid #b4b4b0;
  border-radius: 3px;
  background: #fff;
  color: #000;
}
.filebox { display: flex; align-items: center; gap: 8px; }
.browse {
  flex: none;
  width: 21px;
  height: 24px;
  border: 1px solid #b4b4b0;
  border-bottom-color: #8d8e86;
  border-radius: 3px;
  background: linear-gradient(#ececea, #cfcfcd);
}

.scroll { width: 14px; padding: 16px 4px 0 3px; border-left: 1px solid #b0b0ae; background: #c0c4c4; }
.thumb { display: block; width: 6px; height: 79%; border-radius: 3px; background: #777b7b; }

.splitter {
  width: 6px;
  border: solid #e8e8e6;
  border-width: 0 1px;
  background: repeating-conic-gradient(#fff 0 25%, #e0e0de 0 50%) 0 0 / 2px 2px;
}

.viewer { display: flex; flex-direction: column; flex: 1; min-width: 0; }
.canvas {
  position: relative;
  flex: 1;
  min-height: 0;
  overflow: hidden;
  background: linear-gradient(#333366, #9696aa);
}
.scene { width: 100%; height: 100%; }
.navcube { position: absolute; top: 0; right: 0; width: 180px; height: 170px; }
.cubetext { font: 400 46px "DejaVu Sans", sans-serif; fill: #17171a; }
.axes { position: absolute; right: 4px; bottom: 20px; width: 30px; height: 24px; }

.docbar { height: 33px; border-top: 1px solid #b6b6b2; }
.doctab {
  display: flex;
  align-items: center;
  gap: 7px;
  width: 156px;
  height: 32px;
  padding: 0 10px 0 4px;
  border: 1px solid #b6b6b2;
  border-top: 0;
  border-radius: 0 0 3px 3px;
  background: #fff;
}
.doctab span { flex: 1; padding-bottom: 2px; }
.tabclose, .tabclose svg { width: 14px; height: 14px; }

.status { display: flex; align-items: center; gap: 14px; height: 37px; padding: 0 1px 1px 5px; }
.message { flex: 1; }
.navstyle { display: flex; align-items: center; }
.mouse { width: 16px; height: 22px; margin-right: 10px; }
.mini { width: 9px; height: 6px; }
```
